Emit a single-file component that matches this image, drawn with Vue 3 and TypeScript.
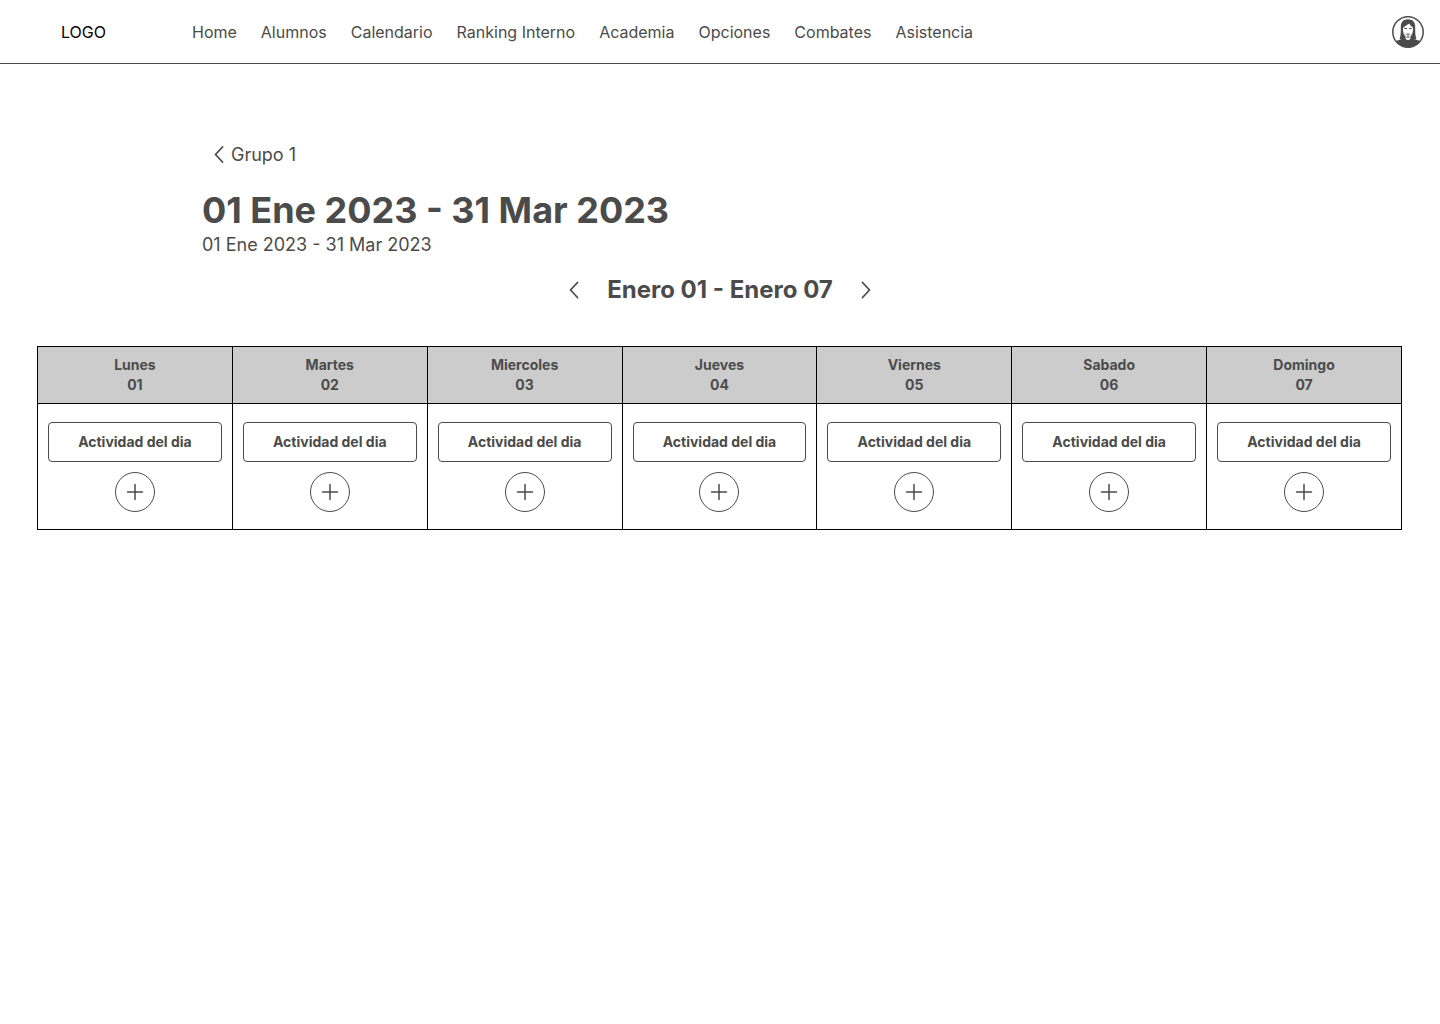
<script setup lang="ts">
import { ref } from 'vue'

interface Day {
  name: string
  number: string
}

const links: string[] = [
  'Home',
  'Alumnos',
  'Calendario',
  'Ranking Interno',
  'Academia',
  'Opciones',
  'Combates',
  'Asistencia',
]

const days = ref<Day[]>([
  { name: 'Lunes', number: '01' },
  { name: 'Martes', number: '02' },
  { name: 'Miercoles', number: '03' },
  { name: 'Jueves', number: '04' },
  { name: 'Viernes', number: '05' },
  { name: 'Sabado', number: '06' },
  { name: 'Domingo', number: '07' },
])
</script>

<template>
  <div class="page">
    <header class="topbar">
      <a class="logo" href="#">LOGO</a>
      <nav class="nav" aria-label="Principal">
        <a v-for="link in links" :key="link" href="#">{{ link }}</a>
      </nav>
      <button class="avatar" type="button" aria-label="Perfil">
        <svg viewBox="0 0 32 32" width="32" height="32" aria-hidden="true">
          <circle cx="16" cy="16" r="15.2" fill="#fff" stroke="#4b4b4b" stroke-width="1.5" />
          <path
            d="M16 3.200c-4.500 0-7.200 2.800-7.200 7.300 0 4.500.2 8.500-1.200 12.300 1.300 1.100 2.900 1.400 4.400 1.200h8c1.500.2 3.100-.1 4.400-1.200-1.400-3.800-1.200-7.800-1.200-12.300 0-4.500-2.700-7.300-7.200-7.300z"
            fill="#4b4b4b"
          />
          <path
            d="M3.800 25.600c1.700-1.400 4.500-2.100 8.500-2.800h7.400c4 .7 6.800 1.400 8.500 2.800C25.500 29.300 21 31.300 16 31.300S6.500 29.300 3.800 25.600z"
            fill="#4b4b4b"
          />
          <path
            d="M11 12.300c1-2.300 3.400-2.800 6.400-4.900.5 1.900 2.300 3 3.600 4.300.2 3.800-.6 6.700-2.500 8.600v1.600c0 1.300-1 2-2.500 2s-2.500-.7-2.500-2v-1.600c-1.900-1.600-2.600-4.400-2.500-8z"
            fill="#fff"
          />
          <path
            d="M12.700 12.500h1.800M17.500 12.500h1.800M14.100 18.400c.9-.7 2.900-.7 3.800 0"
            fill="none"
            stroke="#4b4b4b"
            stroke-width="1"
          />
          <path d="M13.300 20.400c1.700 1 3.700 1 5.400 0l-.6 1.300h-4.200z" fill="#4b4b4b" opacity="0.6" />
          <path d="M15.100 19.500h1.800l-.4 2h-1z" fill="#4b4b4b" />
        </svg>
      </button>
    </header>

    <main>
      <section class="intro">
        <a class="back" href="#">
          <svg viewBox="0 0 10 18" width="10" height="18" aria-hidden="true">
            <path d="M8.500 1 1.500 8.500l7 7.500" />
          </svg>
          Grupo 1
        </a>
        <h1>01 Ene 2023 - 31 Mar 2023</h1>
        <p>01 Ene 2023 - 31 Mar 2023</p>
      </section>

      <div class="week">
        <button type="button" aria-label="Semana anterior">
          <svg viewBox="0 0 10 18" width="10" height="18" aria-hidden="true">
            <path d="M8.500 1.500 1.500 9l7 7.500" />
          </svg>
        </button>
        <h2>Enero 01 - Enero 07</h2>
        <button type="button" aria-label="Semana siguiente">
          <svg viewBox="0 0 10 18" width="10" height="18" aria-hidden="true">
            <path d="M1.500 1.500 8.500 9l-7 7.500" />
          </svg>
        </button>
      </div>

      <div class="calendar">
        <table>
          <thead>
            <tr>
              <th v-for="day in days" :key="day.number" scope="col">
                {{ day.name }}<br />{{ day.number }}
              </th>
            </tr>
          </thead>
          <tbody>
            <tr>
              <td v-for="day in days" :key="day.number">
                <div class="slot">
                  <button class="activity" type="button">Actividad del dia</button>
                  <button class="add" type="button" :aria-label="`Agregar actividad al ${day.name}`">
                    <svg viewBox="0 0 40 40" width="40" height="40" aria-hidden="true">
                      <circle cx="20" cy="20" r="19.500" stroke-width="1" />
                      <path d="M20 12.500v15M12.500 20h15" stroke-width="1.500" />
                    </svg>
                  </button>
                </div>
              </td>
            </tr>
          </tbody>
        </table>
      </div>
    </main>
  </div>
</template>

<style>
body {
  margin: 0;
  background: #fff;
}
</style>

<style scoped>
.page {
  color: #4b4b4b;
  font-family: Inter, 'Liberation Sans', sans-serif;
  font-size: 16px;
}

a {
  color: inherit;
  text-decoration: none;
}

button {
  padding: 0;
  border: 0;
  background: none;
  color: inherit;
  font: inherit;
  cursor: pointer;
}

svg {
  display: block;
  stroke-linecap: round;
  stroke-linejoin: round;
}

.topbar {
  display: flex;
  align-items: center;
  box-sizing: border-box;
  height: 64px;
  padding: 0 16px 0 61px;
  border-bottom: 1px solid #4b4b4b;
}

.logo {
  flex: none;
  width: 131px;
  color: #000;
}

.nav {
  display: flex;
  flex: 1;
  gap: 24px;
  white-space: nowrap;
}

.intro {
  padding: 79px 202px 0;
}

.back {
  display: flex;
  align-items: center;
  gap: 7px;
  width: max-content;
  margin-left: 12px;
  font-size: 18px;
  line-height: 24px;
}

.back path,
.week path {
  fill: none;
  stroke: #4b4b4b;
  stroke-width: 1.8;
}

h1 {
  margin: 19px 0 0;
  font-size: 36px;
  line-height: 48px;
}

.intro p {
  margin: 0;
  font-size: 18px;
  line-height: 22px;
}

.week {
  display: flex;
  align-items: center;
  justify-content: center;
  gap: 28px;
  margin-top: 19px;
}

h2 {
  margin: 0;
  font-size: 24px;
  line-height: 30px;
}

.calendar {
  margin-top: 41px;
  padding: 0 38px 0 37px;
}

table {
  width: 100%;
  border-collapse: collapse;
  table-layout: fixed;
}

th,
td {
  padding: 0;
  border: 1px solid #000;
  text-align: center;
}

th {
  height: 56px;
  background: #ccc;
  font-size: 14px;
  font-weight: 700;
  line-height: 20px;
}

.slot {
  display: flex;
  flex-direction: column;
  align-items: center;
  gap: 10px;
  padding: 18px 10px 17px;
}

.activity {
  box-sizing: border-box;
  width: 100%;
  height: 40px;
  border: 1px solid #4b4b4b;
  border-radius: 4px;
  font-size: 14px;
  font-weight: 700;
  line-height: 20px;
}

.add svg {
  fill: none;
  stroke: #4b4b4b;
}
</style>
